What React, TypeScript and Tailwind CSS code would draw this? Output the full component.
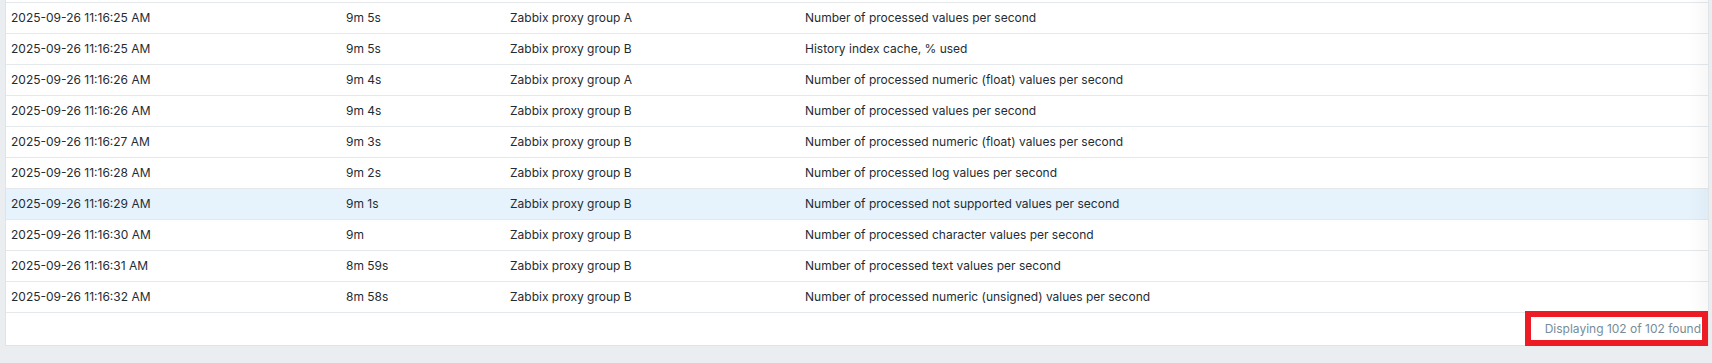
const rows = [
  { time: "2025-09-26 11:16:25 AM", age: "9m 5s", group: "Zabbix proxy group A", name: "Number of processed values per second" },
  { time: "2025-09-26 11:16:25 AM", age: "9m 5s", group: "Zabbix proxy group B", name: "History index cache, % used" },
  { time: "2025-09-26 11:16:26 AM", age: "9m 4s", group: "Zabbix proxy group A", name: "Number of processed numeric (float) values per second" },
  { time: "2025-09-26 11:16:26 AM", age: "9m 4s", group: "Zabbix proxy group B", name: "Number of processed values per second" },
  { time: "2025-09-26 11:16:27 AM", age: "9m 3s", group: "Zabbix proxy group B", name: "Number of processed numeric (float) values per second" },
  { time: "2025-09-26 11:16:28 AM", age: "9m 2s", group: "Zabbix proxy group B", name: "Number of processed log values per second" },
  { time: "2025-09-26 11:16:29 AM", age: "9m 1s", group: "Zabbix proxy group B", name: "Number of processed not supported values per second", active: true },
  { time: "2025-09-26 11:16:30 AM", age: "9m", group: "Zabbix proxy group B", name: "Number of processed character values per second" },
  { time: "2025-09-26 11:16:31 AM", age: "8m 59s", group: "Zabbix proxy group B", name: "Number of processed text values per second" },
  { time: "2025-09-26 11:16:32 AM", age: "8m 58s", group: "Zabbix proxy group B", name: "Number of processed numeric (unsigned) values per second" },
];

export default function App() {
  return (
    <div className="w-[1712px] h-[363px] overflow-hidden bg-[#ebeef0] pl-[5px] pr-[3px] font-['Inter',sans-serif] text-[12px] text-[#1f2c33]">
      <div className="relative bg-white border-x border-b border-[#dfe4e7]">
        {/* right edge shade */}
        <div className="pointer-events-none absolute right-0 top-0 bottom-[33px] w-[20px] bg-gradient-to-r from-transparent to-black/[0.03]" />

        <div className="h-[2px]" />
        <div className="border-t border-[#e6e9ec]">
          {rows.map((r, i) => (
            <div
              key={i}
              className={
                "grid grid-cols-[335px_164px_295px_1fr] h-[31px] items-center border-b border-[#e6e9ec] " +
                (r.active ? "bg-[#e6f3fd]" : "")
              }
            >
              <div className="pl-[5px] whitespace-nowrap">{r.time}</div>
              <div className="pl-[5px] whitespace-nowrap">{r.age}</div>
              <div className="pl-[5px] whitespace-nowrap">{r.group}</div>
              <div className="pl-[5px] whitespace-nowrap">{r.name}</div>
            </div>
          ))}
        </div>

        <div className="relative h-[32px] flex items-center justify-end pr-[7px] text-[#768d99]">
          <span>Displaying 102 of 102 found</span>
          {/* highlight annotation */}
          <div className="absolute right-0 top-[-2px] w-[183px] h-[35px] border-[6px] border-[#ed1c24]" />
        </div>
      </div>
    </div>
  );
}
